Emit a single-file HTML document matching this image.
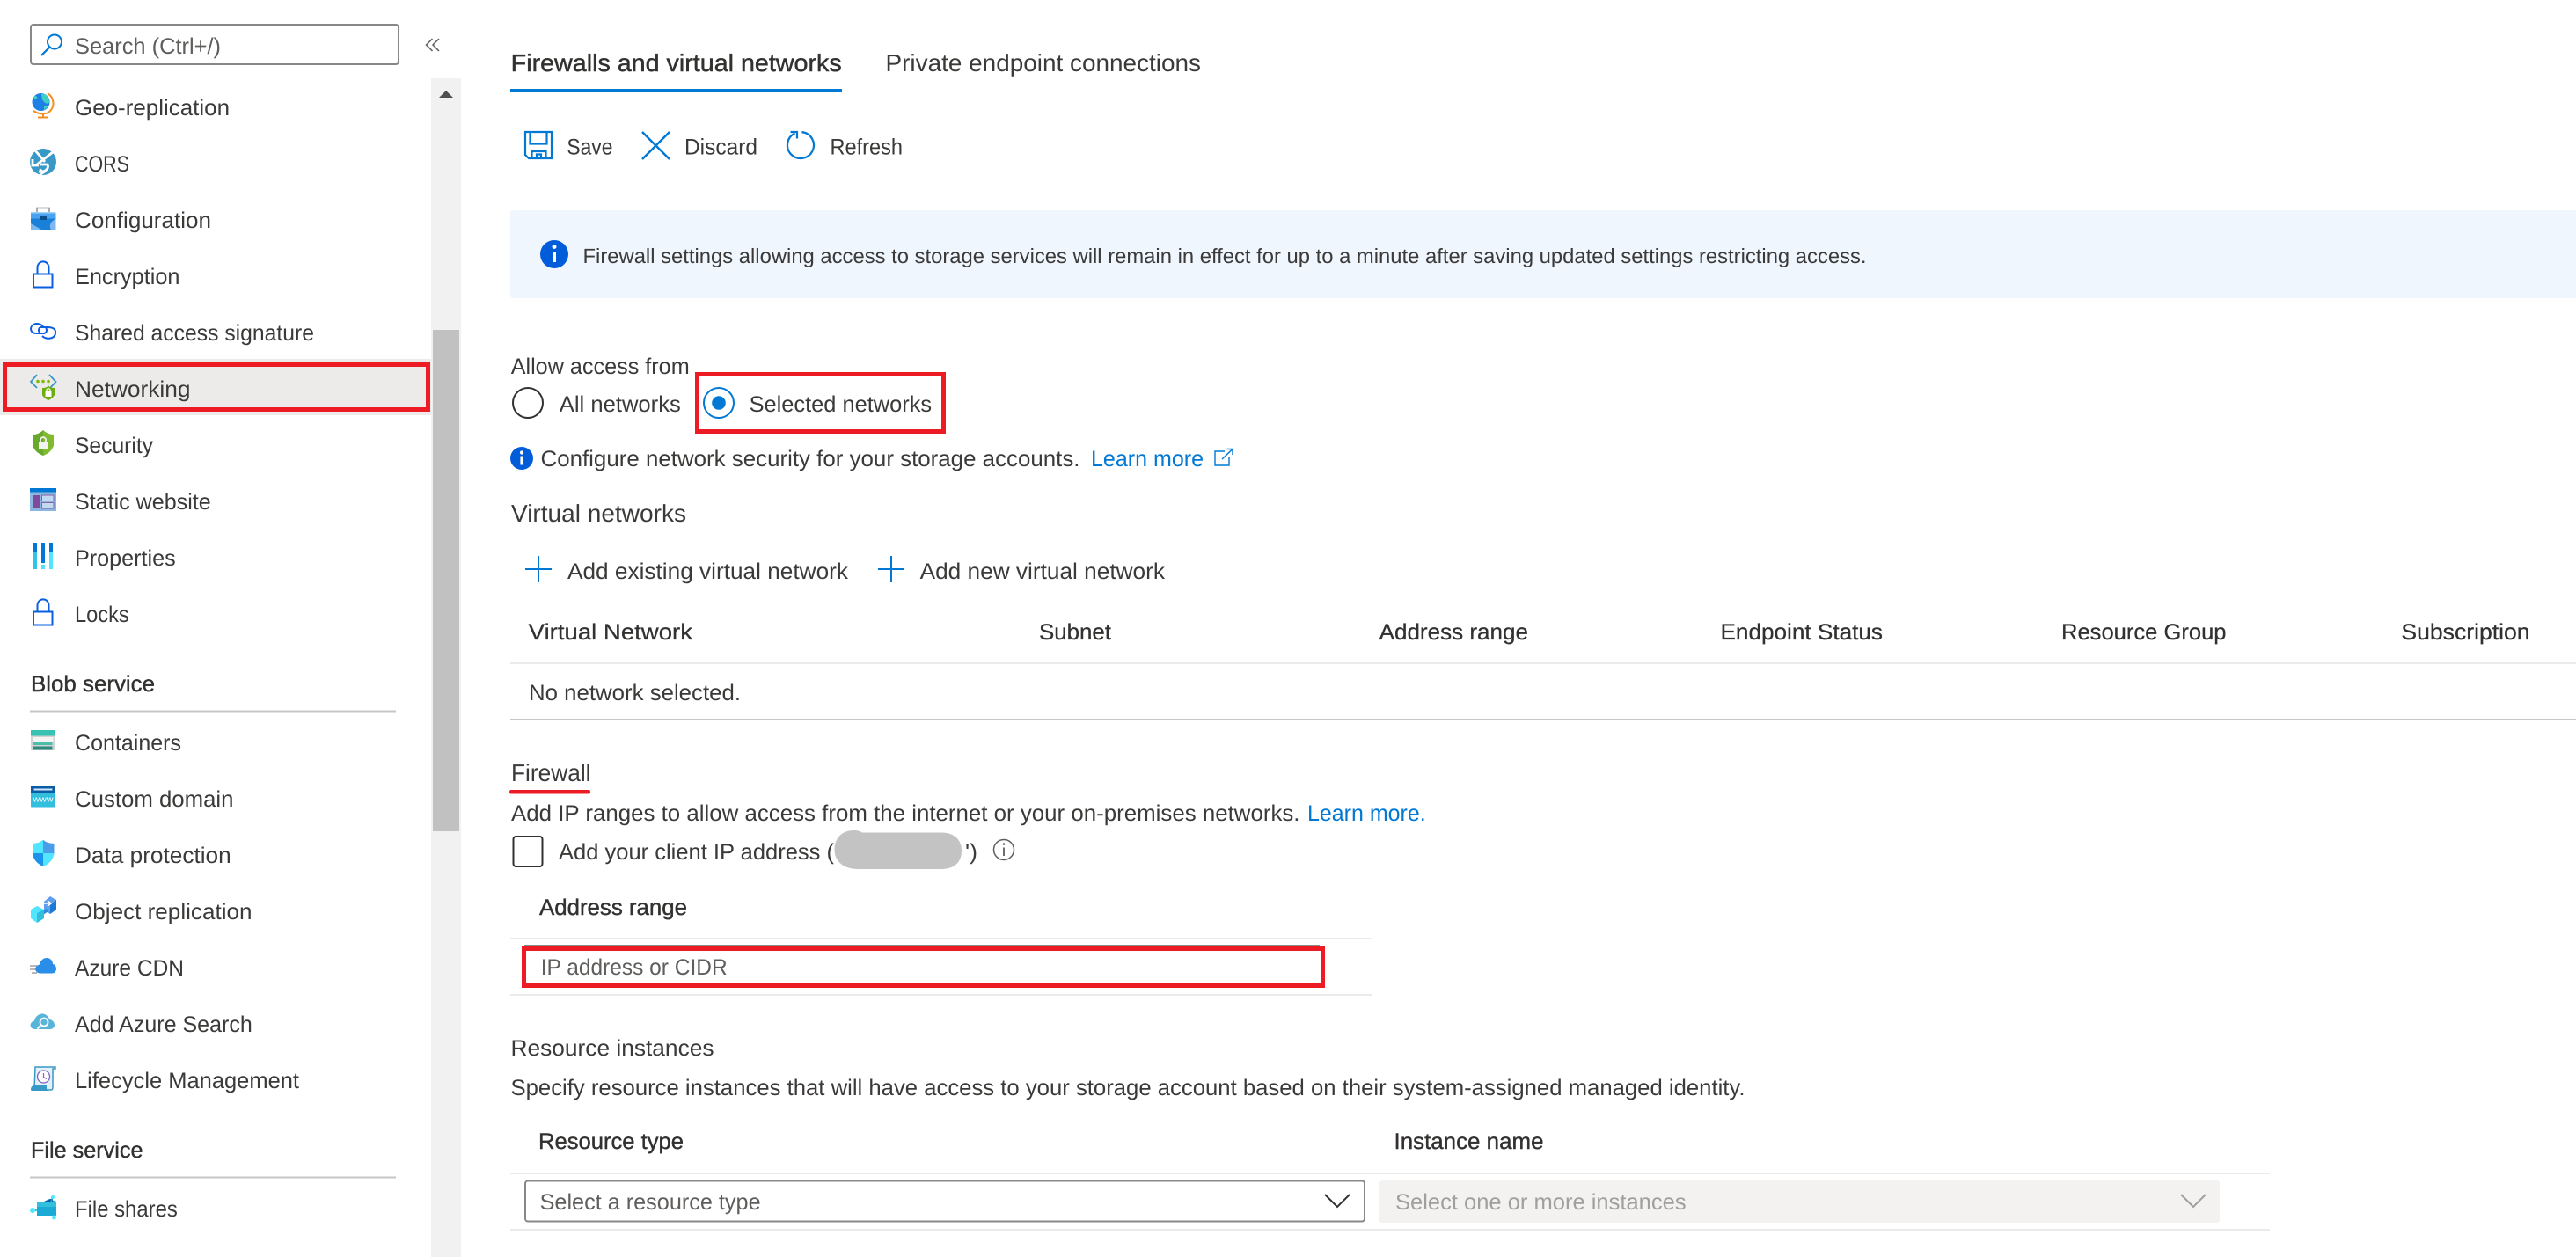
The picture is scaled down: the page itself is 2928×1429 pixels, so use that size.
<!DOCTYPE html>
<html lang="en"><head><meta charset="utf-8"><title>Firewalls and virtual networks</title>
<style>
html,body{margin:0;padding:0;background:#fff;width:2928px;height:1429px;overflow:hidden}
svg{display:block}
text{font-family:"Liberation Sans",sans-serif;font-size:25.5px;fill:#3b3a39;text-rendering:geometricPrecision}
.b{font-size:25.5px;fill:#323130;stroke:#323130;stroke-width:.4px}
.h{fill:#323130;stroke:#323130;stroke-width:.25px}
.l{font-size:27.5px}
.s{font-size:23.5px}
.a{fill:#0078d4}
.p{fill:#605e5c}
.d{fill:#a19f9d}
</style></head><body>
<svg xmlns="http://www.w3.org/2000/svg" width="2928" height="1429" viewBox="0 0 2928 1429">
<rect width="2928" height="1429" fill="#fff"/>

<!-- search -->
<rect x="35" y="28" width="418" height="45" rx="3" fill="#fff" stroke="#8a8886" stroke-width="2"/>
<circle cx="62" cy="47.500" r="8" fill="none" stroke="#0078d4" stroke-width="2"/>
<path d="M56.500 53.500 L47 63" stroke="#0078d4" stroke-width="2.200" fill="none"/>
<text x="85" y="61" textLength="166" lengthAdjust="spacingAndGlyphs" class="p">Search (Ctrl+/)</text>
<path d="M491.500 44 L484.500 51 L491.500 58 M499 44 L492 51 L499 58" stroke="#605e5c" stroke-width="1.500" fill="none"/>

<!-- scrollbar -->
<rect x="490" y="89" width="34" height="1340" fill="#f1f1f1"/>
<path d="M499 111 L507 103 L515 111 Z" fill="#505050"/>
<rect x="492" y="375" width="30" height="570" fill="#c1c1c1"/>

<!-- selected -->
<rect x="0" y="408" width="490" height="64" fill="#edebe9"/>
<rect x="5.500" y="414.500" width="481" height="51" fill="none" stroke="#ed1c24" stroke-width="5"/>

<!-- sidebar text -->
<text x="85" y="131" textLength="176" lengthAdjust="spacingAndGlyphs">Geo-replication</text>
<text x="85" y="195" textLength="62" lengthAdjust="spacingAndGlyphs">CORS</text>
<text x="85" y="259" textLength="155" lengthAdjust="spacingAndGlyphs">Configuration</text>
<text x="85" y="323" textLength="119.500" lengthAdjust="spacingAndGlyphs">Encryption</text>
<text x="85" y="387" textLength="272" lengthAdjust="spacingAndGlyphs">Shared access signature</text>
<text x="85" y="451" textLength="131.500" lengthAdjust="spacingAndGlyphs">Networking</text>
<text x="85" y="515" textLength="89" lengthAdjust="spacingAndGlyphs">Security</text>
<text x="85" y="579" textLength="154.700" lengthAdjust="spacingAndGlyphs">Static website</text>
<text x="85" y="643" textLength="114.700" lengthAdjust="spacingAndGlyphs">Properties</text>
<text x="85" y="707" textLength="61.700" lengthAdjust="spacingAndGlyphs">Locks</text>
<text x="35" y="786" textLength="141" lengthAdjust="spacingAndGlyphs" class="b">Blob service</text>
<rect x="34" y="807.500" width="416" height="2" fill="#c8c6c4"/>
<text x="85" y="853" textLength="121" lengthAdjust="spacingAndGlyphs">Containers</text>
<text x="85" y="917" textLength="180.500" lengthAdjust="spacingAndGlyphs">Custom domain</text>
<text x="85" y="981" textLength="177.700" lengthAdjust="spacingAndGlyphs">Data protection</text>
<text x="85" y="1045" textLength="201.500" lengthAdjust="spacingAndGlyphs">Object replication</text>
<text x="85" y="1109" textLength="124" lengthAdjust="spacingAndGlyphs">Azure CDN</text>
<text x="85" y="1173" textLength="201.800" lengthAdjust="spacingAndGlyphs">Add Azure Search</text>
<text x="85" y="1237" textLength="255" lengthAdjust="spacingAndGlyphs">Lifecycle Management</text>
<text x="35" y="1316" textLength="127.500" lengthAdjust="spacingAndGlyphs" class="b">File service</text>
<rect x="34" y="1337.500" width="416" height="2" fill="#c8c6c4"/>
<text x="85" y="1383" textLength="116.800" lengthAdjust="spacingAndGlyphs">File shares</text>

<!-- geo -->
<circle cx="46.500" cy="116" r="10" fill="#1e7fe6"/>
<path d="M47 107 C53 106 56 110 56 117 C52 119 50 116 48 113 Z M38 110 C41 108 43 110 42 112 C40 113 38 112 38 110 Z M50 120 L55 121 L50 125 Z" fill="#3fd0c4"/>
<path d="M54 106 C62 111 63 122 55 128 C50 130 44 130 38 126" fill="none" stroke="#f78d1e" stroke-width="2"/>
<path d="M49 130 V133 M43 133.500 H55" stroke="#f78d1e" stroke-width="2" fill="none"/>
<!-- cors -->
<circle cx="49" cy="184" r="15" fill="#3999c6"/>
<path d="M40 171 L51 184 M60 173 L42 187 M37 181 V188 H44 M44 195 C51 196 56 192 54 187 L46 187" stroke="#fff" stroke-width="2.800" fill="none"/>
<path d="M45 192 L50 196 L45 199" stroke="#fff" stroke-width="2" fill="none"/>
<!-- configuration -->
<path d="M42 241 V236.500 H56 V241" fill="none" stroke="#a0a1a2" stroke-width="1.800"/>
<rect x="35" y="241" width="28.500" height="20" fill="#1a7fd8"/>
<rect x="35" y="241" width="28.500" height="7.500" fill="#4aa3ef"/>
<rect x="35" y="241" width="28.500" height="1.500" fill="#9fd0f7"/>
<path d="M35 254 L47 261 H35 Z M63.500 249 V261 H58 C55 256 58 251 63.500 249Z" fill="#7eb8ef"/>
<rect x="45" y="246" width="8" height="4" fill="#0b4f8a"/>
<!-- encryption -->
<rect x="38" y="311.500" width="21.500" height="15" fill="none" stroke="#0a5fe0" stroke-width="2"/>
<path d="M42.500 311 V304.500 C42.500 295 55.500 295 55.500 304.500 V311" fill="none" stroke="#0a5fe0" stroke-width="2"/>
<!-- SAS -->
<path d="M49 371 C46 368 42 367.500 39 368.500 C33 371 34 379 41 379 H49 C53 379 54 375 52 373" fill="none" stroke="#0a5fe0" stroke-width="2"/>
<path d="M48 382 C52 386 62 386 63 379 C64 373 58 372 54 372 H47 C44 372 43 376 45 378" fill="none" stroke="#0a5fe0" stroke-width="2"/>
<!-- networking -->
<path d="M42 426 L35 434 L42 441 M56 426 L63.500 434 L57 441" fill="none" stroke="#3999c6" stroke-width="1.800"/>
<circle cx="43" cy="433.500" r="1.800" fill="#7fba00"/><circle cx="49" cy="433.500" r="1.800" fill="#7fba00"/><circle cx="55" cy="433.500" r="1.800" fill="#7fba00"/>
<path d="M48 441 Q54 441 55 438 Q56 441 62 441 V449 Q60 453 55 455 Q50 453 48 449 Z" fill="#6cae0e"/>
<rect x="51.500" y="445" width="7" height="6" fill="#fff"/><path d="M53 445 V443 Q55 440.500 57 443 V445" fill="none" stroke="#fff" stroke-width="1.200"/>
<!-- security -->
<path d="M37 494 Q44 494 49 489 Q54 494 61 494 V506 Q59 514 49 518 Q39 514 37 506 Z" fill="#68a82b"/>
<path d="M49 489 Q54 494 61 494 V506 Q59 514 49 518 Z" fill="#7fba2f"/>
<rect x="44" y="502" width="10" height="8" fill="#f2f2f2"/><path d="M46 502 V499 Q49 495 52 499 V502" fill="none" stroke="#f2f2f2" stroke-width="1.800"/>
<!-- static -->
<rect x="34" y="555" width="30" height="26" fill="#8ab6e0"/>
<rect x="34" y="555" width="30" height="4.500" fill="#0078d4"/>
<rect x="37" y="563" width="8.500" height="15" fill="#7f4a9d"/>
<rect x="47.500" y="563" width="13.500" height="6.500" fill="#c3d9ef" stroke="#8763a8" stroke-width="1"/>
<rect x="47.500" y="571.500" width="13.500" height="6.500" fill="#c3d9ef" stroke="#8763a8" stroke-width="1"/>
<!-- properties -->
<rect x="37.500" y="617" width="4.500" height="30" fill="#32c3e8"/><rect x="37.500" y="617" width="4.500" height="10" fill="#0078d4"/>
<rect x="47" y="617" width="4" height="30" fill="#0078d4"/><rect x="47" y="640" width="4" height="2" fill="#dff"/><rect x="47" y="642" width="4" height="5" fill="#5ae0f5"/>
<rect x="56" y="617" width="4" height="30" fill="#50e6ff"/><rect x="56" y="617" width="4" height="10" fill="#0078d4"/>
<!-- locks -->
<rect x="38" y="695.500" width="21.500" height="15" fill="none" stroke="#0a5fe0" stroke-width="2"/>
<path d="M42.500 695 V688.500 C42.500 679 55.500 679 55.500 688.500 V695" fill="none" stroke="#0a5fe0" stroke-width="2"/>
<!-- containers -->
<rect x="35" y="830" width="28" height="23" rx="1" fill="#d2d2d2"/>
<rect x="35" y="830" width="28" height="6.500" fill="#37c2b1"/>
<rect x="37.500" y="838" width="23" height="5" fill="#f4f4f4"/>
<rect x="37.500" y="843.500" width="22" height="3.500" fill="#4bbfa9"/>
<rect x="37.500" y="848.500" width="22" height="4" fill="#2c8a7d"/>
<!-- custom domain -->
<rect x="35" y="894" width="28" height="23.500" rx="1" fill="#32bedd"/>
<rect x="35" y="894" width="28" height="7" fill="#0b5ba6"/>
<rect x="38.500" y="896.500" width="21" height="2" fill="#cfe7f7"/>
<text x="37.500" y="911.500" textLength="23" lengthAdjust="spacingAndGlyphs" style="font-size:9.500px;fill:#fff">www</text>
<!-- data protection -->
<path d="M37 959 Q44 959 49 955 Q54 959 61.500 959 V970 Q60 980 49 985 Q38 980 37 970 Z" fill="#1b93eb"/>
<path d="M37 959 Q44 959 49 955 V970 H37 Z" fill="#50e6ff"/><path d="M49 970 H61.500 Q60 980 49 985 Z" fill="#50e6ff"/>
<path d="M49 955 Q54 959 61.500 959 V970 H49 Z" fill="#4a9de8"/>
<!-- object replication -->
<path d="M50 1025 L57 1019 L64 1023 V1034 L57 1039 L50 1035 Z" fill="#5ea0ef"/><path d="M57 1029 L64 1023 V1034 L57 1039 Z" fill="#1c7ad6"/>
<path d="M44 1039 L53 1033 L55 1036 L46 1042 Z" fill="#2a8bdd"/>
<path d="M35 1034 L42 1030 L50 1034 V1044 L42 1049 L35 1044 Z" fill="#50e6ff"/><path d="M42 1038 L50 1034 V1044 L42 1049 Z" fill="#32bedd"/>
<path d="M49 1027 L57 1027 M54 1024 L58 1027 L54 1030" stroke="#fff" stroke-width="1.600" fill="none"/>
<!-- cdn -->
<path d="M34 1098 H42 M34 1102 H42 M36 1106 H42" stroke="#a0a1a2" stroke-width="1.600"/>
<path d="M46 1106.500 C39 1106.500 38 1098 45 1096.500 C46 1091 50 1089 53 1089 C57 1089 60 1092 60 1096 C65 1096.500 66 1106.500 59 1106.500 Z" fill="#2a8de8"/>
<!-- azure search -->
<path d="M40 1170 C33 1170 33 1162 39 1160.500 C40 1155 45 1152 49 1152.500 C53 1153 56 1157 56 1159 C62 1159.500 65 1168 58 1170 Z" fill="#59b4d9"/>
<circle cx="50" cy="1162" r="4.500" fill="none" stroke="#fff" stroke-width="1.800"/><path d="M47 1165 L42.500 1169.500" stroke="#fff" stroke-width="2"/>
<!-- lifecycle -->
<path d="M40 1213 H63 V1215 H60 V1236 Q60 1239 58 1239 H39 Z" fill="#e3f1f8" stroke="#3999c6" stroke-width="1.500"/>
<path d="M35 1239 Q35 1234 39 1234 H53 V1237 Q53 1240 56 1240 H38 Q35 1240 35 1239Z" fill="#3999c6"/>
<circle cx="49.500" cy="1224" r="7" fill="#fff" stroke="#8661c5" stroke-width="1.300"/><path d="M49.500 1220 V1224.500 L53 1226.500" stroke="#8661c5" stroke-width="1.200" fill="none"/>
<!-- file shares -->
<path d="M42 1367 L50 1366 L56 1363 L64 1366 V1382 H42 Z" fill="#1ba9d5"/><path d="M42 1367 H64 V1372 H42 Z" fill="#32bedd"/><path d="M50 1366 L60 1362 V1367 Z" fill="#0b5ba6"/>
<path d="M38 1376 H43 M60 1380 L61.500 1384 M58 1366 L60 1361" stroke="#1ba9d5" stroke-width="1.500"/>
<circle cx="37" cy="1376" r="3" fill="#50e6ff"/><circle cx="61.500" cy="1384" r="2.500" fill="#50e6ff"/><circle cx="60" cy="1361" r="2" fill="#50e6ff"/>

<!-- tabs -->
<text x="580.700" y="81" textLength="376" lengthAdjust="spacingAndGlyphs" class="l" style="fill:#323130;stroke:#323130;stroke-width:.45px">Firewalls and virtual networks</text>
<text x="1006.500" y="81" textLength="358.500" lengthAdjust="spacingAndGlyphs" class="l">Private endpoint connections</text>
<rect x="580" y="101" width="377" height="4" fill="#0078d4"/>

<!-- commands -->
<path d="M597 150 H627 V180 H601 L597 176 Z" fill="none" stroke="#0078d4" stroke-width="2.200"/>
<path d="M602.500 150 V163.500 H621.500 V150 M604.500 180 V172 H620.500 V180 M610 180 V175.500 H615 V180" fill="none" stroke="#0078d4" stroke-width="2.200"/>
<text x="644.400" y="175.500" textLength="52" lengthAdjust="spacingAndGlyphs">Save</text>
<path d="M730 150 L761 181 M761 150 L730 181" stroke="#0078d4" stroke-width="2.400" fill="none"/>
<text x="778" y="175.500" textLength="83" lengthAdjust="spacingAndGlyphs">Discard</text>
<path d="M911.500 150.100 A15 15 0 1 1 903.500 151.500" fill="none" stroke="#0078d4" stroke-width="2.200"/>
<path d="M898.500 150 H906 V157.500" fill="none" stroke="#0078d4" stroke-width="2.200"/>
<text x="943.500" y="175.500" textLength="82.500" lengthAdjust="spacingAndGlyphs">Refresh</text>

<!-- banner -->
<rect x="580" y="239" width="2360" height="100" rx="3" fill="#eff6fe"/>
<circle cx="630" cy="289" r="16" fill="#015cda"/>
<rect x="628" y="286" width="4" height="12" fill="#fff"/><circle cx="630" cy="280.500" r="2.500" fill="#fff"/>
<text x="662.500" y="299" textLength="1459" lengthAdjust="spacingAndGlyphs" class="s">Firewall settings allowing access to storage services will remain in effect for up to a minute after saving updated settings restricting access.</text>

<!-- allow access -->
<text x="580.700" y="425" textLength="203" lengthAdjust="spacingAndGlyphs">Allow access from</text>
<circle cx="600" cy="458" r="17" fill="#fff" stroke="#323130" stroke-width="2"/>
<text x="635.800" y="468" textLength="138" lengthAdjust="spacingAndGlyphs">All networks</text>
<circle cx="817" cy="458" r="17" fill="#fff" stroke="#0078d4" stroke-width="2"/>
<circle cx="817" cy="458" r="7.800" fill="#0078d4"/>
<text x="851.600" y="468" textLength="207.500" lengthAdjust="spacingAndGlyphs">Selected networks</text>
<rect x="792.500" y="425.500" width="280" height="65" fill="none" stroke="#ed1c24" stroke-width="5"/>

<circle cx="593" cy="521" r="13" fill="#015cda"/>
<rect x="591.400" y="518.500" width="3.200" height="10" fill="#fff"/><circle cx="593" cy="514.500" r="2.100" fill="#fff"/>
<text x="614.500" y="530" textLength="613" lengthAdjust="spacingAndGlyphs">Configure network security for your storage accounts.</text>
<text x="1240" y="530" textLength="128" lengthAdjust="spacingAndGlyphs" class="a">Learn more</text>
<path d="M1392 513 H1381 V529 H1397 V519 M1389 522 L1400.500 511 M1394.500 510.500 H1401 V517" fill="none" stroke="#0078d4" stroke-width="1.400"/>

<!-- virtual networks -->
<text x="581" y="593" textLength="199" lengthAdjust="spacingAndGlyphs" class="l">Virtual networks</text>
<path d="M597 647 H627 M612 632 V662" stroke="#0078d4" stroke-width="2" fill="none"/>
<text x="645" y="658" textLength="319" lengthAdjust="spacingAndGlyphs">Add existing virtual network</text>
<path d="M998 647 H1028 M1013 632 V662" stroke="#0078d4" stroke-width="2" fill="none"/>
<text x="1045.600" y="658" textLength="278.400" lengthAdjust="spacingAndGlyphs">Add new virtual network</text>

<text x="600.700" y="727" textLength="186.300" lengthAdjust="spacingAndGlyphs" class="h">Virtual Network</text>
<text x="1181" y="727" textLength="82" lengthAdjust="spacingAndGlyphs" class="h">Subnet</text>
<text x="1567.600" y="727" textLength="169.400" lengthAdjust="spacingAndGlyphs" class="h">Address range</text>
<text x="1955.500" y="727" textLength="184.500" lengthAdjust="spacingAndGlyphs" class="h">Endpoint Status</text>
<text x="2343" y="727" textLength="187.500" lengthAdjust="spacingAndGlyphs" class="h">Resource Group</text>
<text x="2729.400" y="727" textLength="146.200" lengthAdjust="spacingAndGlyphs" class="h">Subscription</text>
<rect x="580" y="753" width="2348" height="2" fill="#edebe9"/>
<text x="601" y="796" textLength="241" lengthAdjust="spacingAndGlyphs">No network selected.</text>
<rect x="580" y="817" width="2348" height="2" fill="#c8c6c4"/>

<!-- firewall -->
<text x="581" y="888" textLength="90.500" lengthAdjust="spacingAndGlyphs" class="l">Firewall</text>
<rect x="579" y="898" width="92" height="4.500" rx="2" fill="#ed1c24"/>
<text x="581" y="933" textLength="896.500" lengthAdjust="spacingAndGlyphs">Add IP ranges to allow access from the internet or your on-premises networks.</text>
<text x="1486" y="933" textLength="134.700" lengthAdjust="spacingAndGlyphs" class="a">Learn more.</text>
<rect x="583.500" y="951" width="33" height="34" rx="3" fill="#fff" stroke="#323130" stroke-width="2"/>
<text x="635" y="977" textLength="313" lengthAdjust="spacingAndGlyphs">Add your client IP address (</text>
<text x="1097" y="977" textLength="14" lengthAdjust="spacingAndGlyphs">')</text>
<path d="M948.500 966 C948.500 952 958 944 970 944 C975 944 978 945 980 946.500 H1070 C1085 946.500 1093 955 1093 967 C1093 980 1085 988 1070 988 H975 C960 988 948.500 980 948.500 966 Z" fill="#c3c3c3"/>
<circle cx="1141" cy="966" r="11.500" fill="none" stroke="#605e5c" stroke-width="1.500"/>
<path d="M1141 963.500 V973" stroke="#605e5c" stroke-width="1.800"/><circle cx="1141" cy="959.500" r="1.300" fill="#605e5c"/>

<text x="613" y="1040" textLength="168" lengthAdjust="spacingAndGlyphs" class="b">Address range</text>
<rect x="580" y="1066" width="980" height="2" fill="#edebe9"/>
<rect x="596" y="1074" width="904" height="2" fill="#8a8886"/>
<rect x="595.500" y="1078.500" width="908" height="42" fill="#fff" stroke="#ed1c24" stroke-width="5"/>
<text x="614.700" y="1108" textLength="212" lengthAdjust="spacingAndGlyphs" class="p">IP address or CIDR</text>
<rect x="580" y="1130" width="980" height="2" fill="#edebe9"/>

<!-- resource instances -->
<text x="580.500" y="1200" textLength="231" lengthAdjust="spacingAndGlyphs">Resource instances</text>
<text x="580.500" y="1245" textLength="1403" lengthAdjust="spacingAndGlyphs">Specify resource instances that will have access to your storage account based on their system-assigned managed identity.</text>
<text x="612" y="1306" textLength="165" lengthAdjust="spacingAndGlyphs" class="b">Resource type</text>
<text x="1584.500" y="1306" textLength="170" lengthAdjust="spacingAndGlyphs" class="b">Instance name</text>
<rect x="580" y="1333" width="2000" height="2" fill="#edebe9"/>
<rect x="597" y="1342.500" width="954" height="46" rx="3" fill="#fff" stroke="#8a8886" stroke-width="2"/>
<text x="613.600" y="1375" textLength="251" lengthAdjust="spacingAndGlyphs" class="p">Select a resource type</text>
<path d="M1506 1358 L1520 1372 L1534 1358" fill="none" stroke="#323130" stroke-width="2"/>
<rect x="1568" y="1342" width="955" height="48" rx="3" fill="#f3f2f1"/>
<text x="1586" y="1375" textLength="330.600" lengthAdjust="spacingAndGlyphs" class="d">Select one or more instances</text>
<path d="M2479 1358 L2493 1372 L2507 1358" fill="none" stroke="#a19f9d" stroke-width="2"/>
<rect x="580" y="1397" width="2000" height="2" fill="#edebe9"/>
</svg>
</body></html>
